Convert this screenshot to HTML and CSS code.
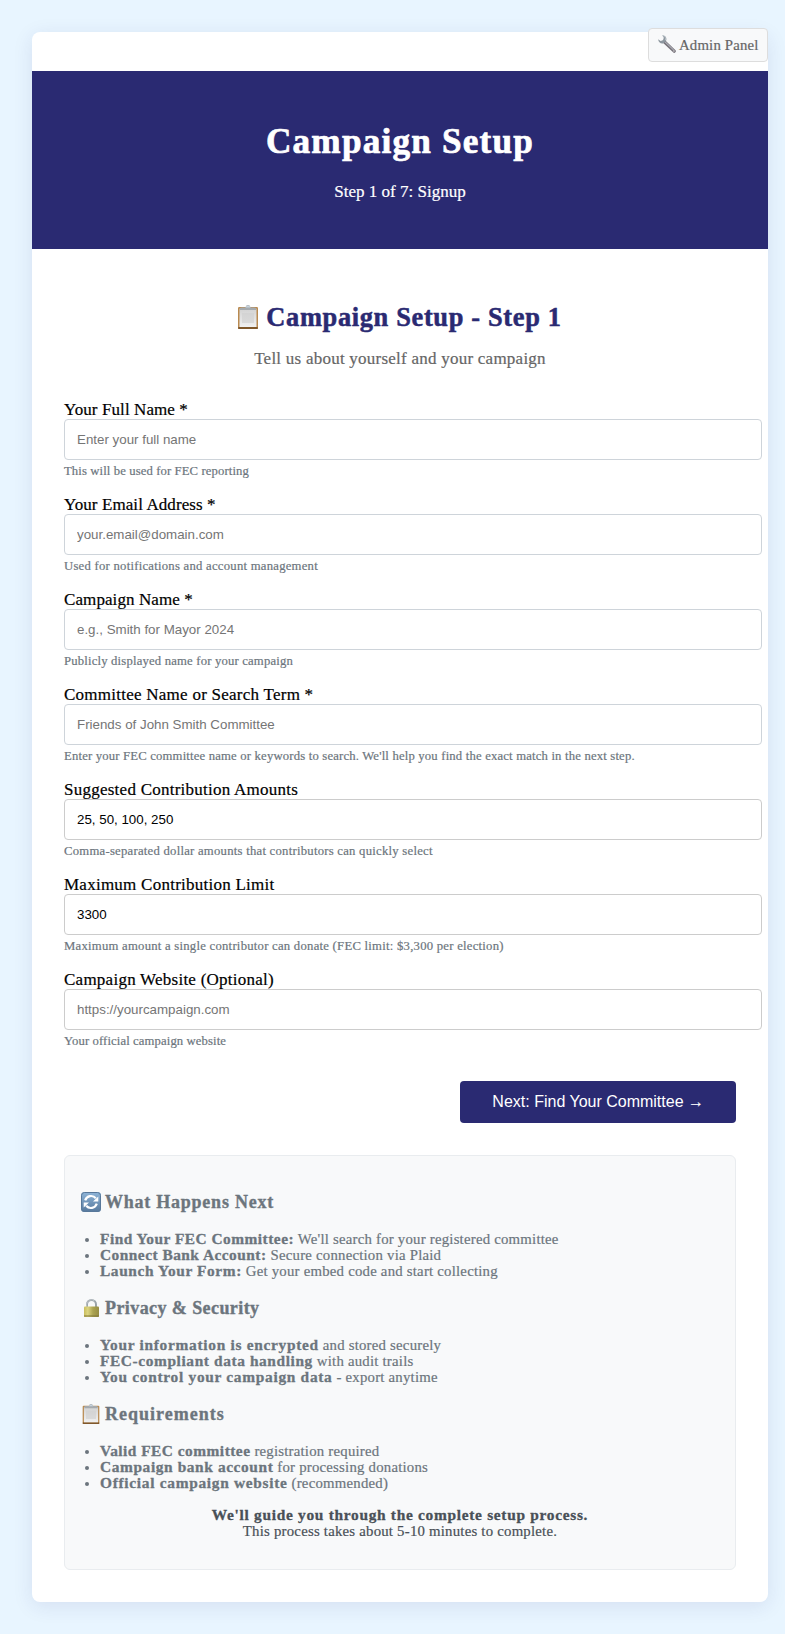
FILE: index.html
```
<!DOCTYPE html>
<html lang="en">
<head>
<meta charset="utf-8">
<title>Campaign Setup</title>
<link rel="stylesheet" href="styles.css">
</head>
<body>
<svg class="defs" aria-hidden="true">
  <defs>
    <linearGradient id="blue" x1="0" y1="0" x2="0" y2="1"><stop offset="0" stop-color="#8fb5d8"/><stop offset="1" stop-color="#56789c"/></linearGradient>
    <linearGradient id="gold" x1="0" y1="0" x2="1" y2="0"><stop offset="0" stop-color="#c9bd5c"/><stop offset=".25" stop-color="#ddd580"/><stop offset=".6" stop-color="#aba351"/><stop offset="1" stop-color="#968d43"/></linearGradient>
    <linearGradient id="paper" x1="0" y1="0" x2="0" y2="1"><stop offset="0" stop-color="#d2d2d2"/><stop offset="1" stop-color="#f1f1f1"/></linearGradient>
    <symbol id="clipboard" viewBox="0 0 20 24">
      <rect x="0" y="2" width="20" height="22" rx="1.2" fill="#b98a50"/>
      <rect x="0" y="22" width="20" height="2" rx="1" fill="#80582b"/>
      <rect x="1.5" y="3.5" width="17" height="18.5" fill="url(#paper)"/>
      <rect x="4" y="8" width="12" height="10" fill="#cfcfcf" opacity=".6"/>
      <path d="M2 5V3.6Q2 2.4 4 2.4H7.4Q8 0 10 0T12.6 2.4H16Q18 2.4 18 3.6V5Z" fill="#a5aaae"/>
      <path d="M7.5 2.6Q8 .5 10 .5T12.5 2.6Z" fill="#c6d3dd"/>
    </symbol>
    <symbol id="refresh" viewBox="0 0 20 20">
      <rect width="20" height="20" rx="3.5" fill="url(#blue)"/>
      <rect x=".5" y=".5" width="19" height="19" rx="3" fill="none" stroke="#58789a"/>
      <path d="M4.2 8.3A6.2 6.2 0 0 1 14.8 6.2M15.8 11.7A6.2 6.2 0 0 1 5.2 13.8" fill="none" stroke="#fff" stroke-width="2.2"/>
      <path d="M17.3 4.4V9.4H12ZM2.7 15.6V10.6H8Z" fill="#fff"/>
    </symbol>
    <symbol id="lock" viewBox="0 0 15 18">
      <path d="M3 9V5.5a4.5 4.5 0 0 1 9 0V9" fill="none" stroke="#9aa3aa" stroke-width="2"/>
      <path d="M2.6 8V5.5a4.9 4.9 0 0 1 8-3.6" fill="none" stroke="#c7cdd1" stroke-width=".8"/>
      <rect x="0" y="7.6" width="15" height="10.4" rx="1" fill="url(#gold)"/>
      <path d="M0 17h15" stroke="#807738" stroke-width="1"/>
    </symbol>
    <symbol id="wrench" viewBox="0 0 18 18">
      <path d="M6 6.5 16.2 16.2" stroke="#77737a" stroke-width="3.2" stroke-linecap="round"/>
      <path d="M7 6.8 15.5 14.8" stroke="#aeb0b8" stroke-width="1.1"/>
      <path d="M4.2.2C7.6.2 9 3 8.2 5.6L5.6 8.2C3 9 .2 7.4.2 4.2L2.6 6 5 5.2 5.8 2.8Z" fill="#8d979f"/>
      <path d="M5 .8C7 1.2 8 3 7.4 5.2" fill="none" stroke="#c3ccd2" stroke-width=".8"/>
      <circle cx="15.9" cy="15.9" r=".7" fill="#eee"/>
    </symbol>
  </defs>
</svg>

<main class="container">
  <a class="admin"><svg class="icon-wrench"><use href="#wrench"/></svg>Admin Panel</a>

  <header class="header">
    <h1>Campaign Setup</h1>
    <p>Step 1 of 7: Signup</p>
  </header>

  <div class="content">
    <h2><svg class="icon-title"><use href="#clipboard"/></svg>Campaign Setup - Step 1</h2>
    <p class="subtitle">Tell us about yourself and your campaign</p>

    <form>
      <div class="group">
        <label class="snug">Your Full Name *</label>
        <input type="text" placeholder="Enter your full name">
        <small class="snug">This will be used for FEC reporting</small>
      </div>
      <div class="group">
        <label class="snug">Your Email Address *</label>
        <input type="text" placeholder="your.email@domain.com">
        <small class="loose">Used for notifications and account management</small>
      </div>
      <div class="group">
        <label class="snug">Campaign Name *</label>
        <input type="text" placeholder="e.g., Smith for Mayor 2024">
        <small>Publicly displayed name for your campaign</small>
      </div>
      <div class="group">
        <label>Committee Name or Search Term *</label>
        <input type="text" placeholder="Friends of John Smith Committee">
        <small>Enter your FEC committee name or keywords to search. We'll help you find the exact match in the next step.</small>
      </div>
      <div class="group">
        <label>Suggested Contribution Amounts</label>
        <input class="plain" type="text" value="25, 50, 100, 250">
        <small class="loose">Comma-separated dollar amounts that contributors can quickly select</small>
      </div>
      <div class="group">
        <label>Maximum Contribution Limit</label>
        <input class="plain" type="text" value="3300">
        <small class="loose">Maximum amount a single contributor can donate (FEC limit: $3,300 per election)</small>
      </div>
      <div class="group">
        <label>Campaign Website (Optional)</label>
        <input class="plain" type="text" placeholder="https://yourcampaign.com">
        <small class="snug">Your official campaign website</small>
      </div>
      <div class="actions"><button type="button">Next: Find Your Committee <span class="arrow">→</span></button></div>
    </form>

    <section class="info">
      <h3><svg class="icon-refresh"><use href="#refresh"/></svg>What Happens Next</h3>
      <ul>
        <li><strong class="snug">Find Your FEC Committee:</strong> We'll search for your registered committee</li>
        <li><strong class="snug">Connect Bank Account:</strong> Secure connection via Plaid</li>
        <li><strong>Launch Your Form:</strong> Get your embed code and start collecting</li>
      </ul>
      <h3 class="snug"><svg class="icon-lock"><use href="#lock"/></svg>Privacy &amp; Security</h3>
      <ul>
        <li><strong class="loose">Your information is encrypted</strong> and stored securely</li>
        <li><strong>FEC-compliant data handling</strong> with audit trails</li>
        <li><strong class="loose">You control your campaign data</strong> - export anytime</li>
      </ul>
      <h3 class="loose"><svg class="icon-clip"><use href="#clipboard"/></svg>Requirements</h3>
      <ul>
        <li><strong class="snug">Valid FEC committee</strong> registration required</li>
        <li><strong>Campaign bank account</strong> for processing donations</li>
        <li><strong class="loose">Official campaign website</strong> (recommended)</li>
      </ul>
      <p class="guide"><strong class="loose">We'll guide you through the complete setup process.</strong><br>This process takes about 5-10 minutes to complete.</p>
    </section>
  </div>
</main>
</body>
</html>
```
FILE: styles.css
```
body {
  margin: 0;
  padding: 32px 17px 32px 32px;
  background: #e8f5ff;
  font-family: Georgia, "Liberation Serif", serif;
  color: #000;
  -webkit-text-stroke: 0.2px;
}
h1, h2, h3, p, ul { margin: 0; }
svg { flex: none; }
.defs { position: absolute; width: 0; height: 0; }

.container {
  position: relative;
  height: 1570px;
  box-sizing: border-box;
  padding-top: 39px;
  background: #fff;
  border-radius: 8px;
  box-shadow: 0 4px 20px rgba(42, 42, 114, 0.1);
}

.admin {
  position: absolute;
  top: -4px;
  right: 0;
  display: flex;
  align-items: center;
  gap: 3px;
  box-sizing: border-box;
  width: 120px;
  height: 34px;
  padding-left: 9px;
  border: 1px solid #ddd;
  border-radius: 4px;
  background: #f8f9fa;
  color: #666;
  font-size: 14.8px;
  letter-spacing: 0.17px;
  white-space: nowrap;
}
.icon-wrench { width: 18px; height: 18px; margin-top: -2px; }

.header {
  height: 178px;
  box-sizing: border-box;
  padding-top: 51px;
  background: #2a2a72;
  color: #fff;
  text-align: center;
}
.header h1 {
  font-size: 35.2px;
  line-height: 40px;
  letter-spacing: 1.2px;
  -webkit-text-stroke: 0.7px;
}
.header p {
  margin-top: 21px;
  font-size: 17px;
  line-height: 18px;
}

.content { padding: 52px 32px 32px; }
.content h2 {
  display: flex;
  justify-content: center;
  align-items: center;
  gap: 8px;
  color: #2a2a72;
  font-size: 26.4px;
  line-height: 32px;
  letter-spacing: 0.66px;
  white-space: nowrap;
  -webkit-text-stroke: 0.5px;
}
.icon-title { width: 20px; height: 24px; }
.subtitle {
  margin-top: 17px;
  color: #666;
  font-size: 17px;
  line-height: 18px;
  letter-spacing: 0.24px;
  text-align: center;
}

form { margin-top: 33px; }
.group {
  display: flex;
  flex-direction: column;
  height: 95px;
}
label {
  font-size: 17px;
  line-height: 18px;
  letter-spacing: 0.25px;
}
label.snug { letter-spacing: 0.09px; }
input {
  box-sizing: border-box;
  width: 698px;
  height: 41px;
  padding: 12px;
  border: 1px solid #ced4da;
  border-radius: 4px;
  background: #fff;
  color: #000;
  font: 13.333px Arial, "Liberation Sans", sans-serif;
  -webkit-text-stroke: 0;
}
input.plain { border-color: #ccc; }
input::placeholder { color: #757575; }
small {
  margin-top: 4px;
  color: #6c757d;
  font-size: 12.7px;
  line-height: 14px;
  letter-spacing: 0.18px;
  white-space: nowrap;
}
small.snug { letter-spacing: 0.11px; }
small.loose { letter-spacing: 0.25px; }

.actions {
  display: flex;
  justify-content: flex-end;
  margin-top: 15px;
}
button {
  height: 42px;
  padding: 0 32px;
  border: 0;
  border-radius: 4px;
  background: #2a2a72;
  color: #fff;
  font: 16px Arial, "Liberation Sans", sans-serif;
  -webkit-text-stroke: 0;
}
.arrow { -webkit-text-stroke: 0.2px; }

.info {
  height: 415px;
  box-sizing: border-box;
  margin-top: 32px;
  padding: 36px 16px 0;
  border: 1px solid #e9ecef;
  border-radius: 6px;
  background: #f8f9fa;
  color: #6c757d;
  font-size: 14.8px;
  line-height: 16px;
  letter-spacing: 0.22px;
}
.info h3 {
  display: flex;
  align-items: center;
  font-size: 18px;
  line-height: 20px;
  letter-spacing: 0.76px;
  -webkit-text-stroke: 0.35px;
}
.info h3.snug { letter-spacing: 0.42px; }
.info h3.loose { letter-spacing: 1.02px; }
.icon-refresh { width: 20px; height: 20px; margin-right: 4px; }
.icon-lock { width: 15px; height: 18px; margin: 0 6.5px 0 2.5px; }
.icon-clip { width: 18px; height: 20px; margin: 0 5px 0 1px; }
.info ul {
  margin: 18.5px 0 19.5px;
  padding-left: 19px;
}
.info strong {
  font-size: 15.4px;
  line-height: 14px;
  letter-spacing: 0.6px;
  -webkit-text-stroke: 0.3px;
}
.info strong.snug { letter-spacing: 0.48px; }
.info strong.loose { letter-spacing: 0.7px; }
.guide {
  margin-top: -3px;
  color: #495057;
  text-align: center;
}
```
